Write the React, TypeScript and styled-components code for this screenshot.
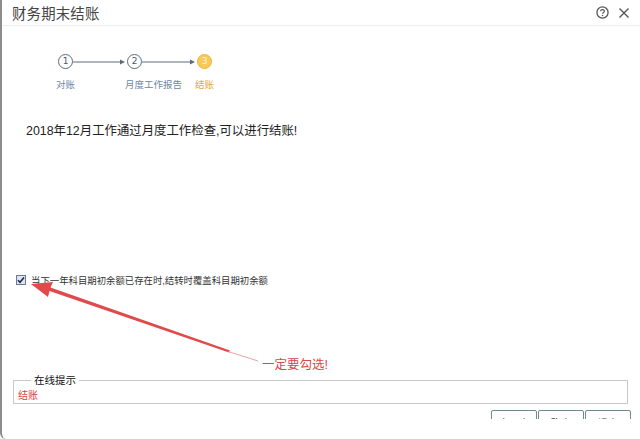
import React from "react";
import styled, { createGlobalStyle } from "styled-components";

const Global = createGlobalStyle`
  html, body { margin: 0; padding: 0; background: #fff; }
  body { font-family: "Liberation Sans", "Noto Sans CJK SC", sans-serif; }
`;

const Dialog = styled.div`
  position: relative;
  width: 640px;
  height: 439px;
  box-sizing: border-box;
  border-left: 2px solid #8c8c8c;
  border-bottom-left-radius: 6px;
  background: #fff;
  overflow: hidden;
  display: flex;
  flex-direction: column;
`;

const TitleBar = styled.div`
  height: 26px;
  box-sizing: border-box;
  border-bottom: 1px solid #efefef;
  display: flex;
  align-items: center;
  padding: 0 10px 0 10px;
`;

const Title = styled.div`
  flex: 1;
  font-size: 14.4px;
  color: #444;
  letter-spacing: 0.2px;
`;

const TitleIcons = styled.div`
  display: flex;
  align-items: center;
  gap: 9px;
`;

const Steps = styled.div`
  display: flex;
  align-items: flex-start;
  margin: 28px 0 0 54px;
`;

const Step = styled.div`
  display: flex;
  flex-direction: column;
  align-items: flex-start;
  width: 16px;
`;

const Circle = styled.div<{ $active?: boolean }>`
  width: 15px;
  height: 15px;
  box-sizing: border-box;
  border-radius: 50%;
  margin-left: 2px;
  border: 1.5px solid ${(p) => (p.$active ? "#f2b43a" : "#5d6b7a")};
  background: ${(p) => (p.$active ? "#f8c95a" : "#fff")};
  color: ${(p) => (p.$active ? "#fff5d8" : "#4a5868")};
  font-size: 9px;
  line-height: 12px;
  text-align: center;
  font-family: "DejaVu Sans", sans-serif;
`;

const StepLabel = styled.div<{ $active?: boolean }>`
  margin-top: 8px;
  white-space: nowrap;
  font-size: 9.5px;
  color: ${(p) => (p.$active ? "#e8a33a" : "#6f87a6")};
`;

const Arrow = styled.div<{ $w: number }>`
  width: ${(p) => p.$w}px;
  height: 15px;
  display: flex;
  align-items: center;
  margin-left: 1px;
`;

const Message = styled.div`
  margin: 32px 0 0 24px;
  font-size: 12.4px;
  line-height: 16px;
  color: #222;
`;

const CheckRow = styled.label`
  display: flex;
  align-items: center;
  gap: 5px;
  margin: 134px 0 0 14px;
  font-size: 9.4px;
  color: #333;
`;

const CheckBox = styled.span`
  width: 10px;
  height: 10px;
  box-sizing: border-box;
  border: 1px solid #6a7a9a;
  background: #dfe4ef;
  display: flex;
  align-items: center;
  justify-content: center;
`;

const Fieldset = styled.fieldset`
  margin: 88px 12px 0 11px;
  padding: 0 4px 2px 4px;
  border: 1px solid #c8c8c8;
  height: 29px;
  box-sizing: border-box;
`;

const Legend = styled.legend`
  margin-left: 13px;
  padding: 0 3px;
  font-size: 10.5px;
  line-height: 10px;
  color: #111;
`;

const Tip = styled.div`
  font-size: 10px;
  line-height: 12px;
  margin-top: 5px;
  color: #d64545;
`;

const ButtonClip = styled.div`
  display: flex;
  justify-content: flex-end;
  margin: 6px 9px 0 0;
  height: 9px;
  overflow: hidden;
`;

const Button = styled.div`
  width: 46px;
  height: 24px;
  box-sizing: border-box;
  border: 1px solid #6f8a8a;
  border-radius: 2px;
  margin-left: 1px;
  background: #fff;
  font-size: 10px;
  text-align: center;
  padding-top: 4px;
  color: #444;
`;

const Overlay = styled.svg`
  position: absolute;
  left: 0;
  top: 0;
  pointer-events: none;
`;

const Callout = styled.div`
  position: absolute;
  left: 260px;
  top: 354px;
  font-size: 12.5px;
  color: #d44a4a;
`;

const ArrowLine = ({ w }: { w: number }) => (
  <Arrow $w={w}>
    <svg width={w} height="6" viewBox={`0 0 ${w} 6`}>
      <line x1="0" y1="3" x2={w - 4} y2="3" stroke="#5d6b7a" strokeWidth="1" />
      <path d={`M${w - 5} 0.5 L${w} 3 L${w - 5} 5.5 Z`} fill="#5d6b7a" />
    </svg>
  </Arrow>
);

export default function App() {
  return (
    <>
      <Global />
      <Dialog>
        <TitleBar>
          <Title>财务期末结账</Title>
          <TitleIcons>
            <svg width="13" height="13" viewBox="0 0 13 13">
              <circle cx="6.5" cy="6.5" r="5.6" fill="none" stroke="#555" strokeWidth="1.3" />
              <path d="M4.6 5.2 C4.6 3.2 8.4 3.2 8.4 5.2 C8.4 6.4 6.5 6.4 6.5 7.8" fill="none" stroke="#555" strokeWidth="1.2" />
              <circle cx="6.5" cy="9.6" r="0.75" fill="#555" />
            </svg>
            <svg width="12" height="12" viewBox="0 0 12 12">
              <path d="M1.5 1.5 L10.5 10.5 M10.5 1.5 L1.5 10.5" stroke="#555" strokeWidth="1.4" />
            </svg>
          </TitleIcons>
        </TitleBar>

        <Steps>
          <Step>
            <Circle>1</Circle>
            <StepLabel>对账</StepLabel>
          </Step>
          <ArrowLine w={52} />
          <Step>
            <Circle>2</Circle>
            <StepLabel>月度工作报告</StepLabel>
          </Step>
          <ArrowLine w={53} />
          <Step>
            <Circle $active>3</Circle>
            <StepLabel $active>结账</StepLabel>
          </Step>
        </Steps>

        <Message>2018年12月工作通过月度工作检查,可以进行结账!</Message>

        <CheckRow>
          <CheckBox>
            <svg width="8" height="8" viewBox="0 0 8 8">
              <path d="M1 4.2 L3 6.3 L7 1.5" fill="none" stroke="#1e2a40" strokeWidth="1.6" />
            </svg>
          </CheckBox>
          当下一年科目期初余额已存在时,结转时覆盖科目期初余额
        </CheckRow>

        <Fieldset>
          <Legend>在线提示</Legend>
          <Tip>结账</Tip>
        </Fieldset>

        <ButtonClip>
          <Button>上一步</Button>
          <Button>确定</Button>
          <Button>退出</Button>
        </ButtonClip>

        <Overlay width="640" height="439" viewBox="0 0 640 439">
          <path
            d="M29 284 L51 282 L48.5 287.5 L228 350.5 L227 352.5 L47.5 291 L46 297 Z"
            fill="#e04a4a"
          />
          <path d="M226 351.5 L256 361" stroke="#e88a8a" strokeWidth="0.8" fill="none" />
        </Overlay>
        <Callout>一定要勾选!</Callout>
      </Dialog>
    </>
  );
}
